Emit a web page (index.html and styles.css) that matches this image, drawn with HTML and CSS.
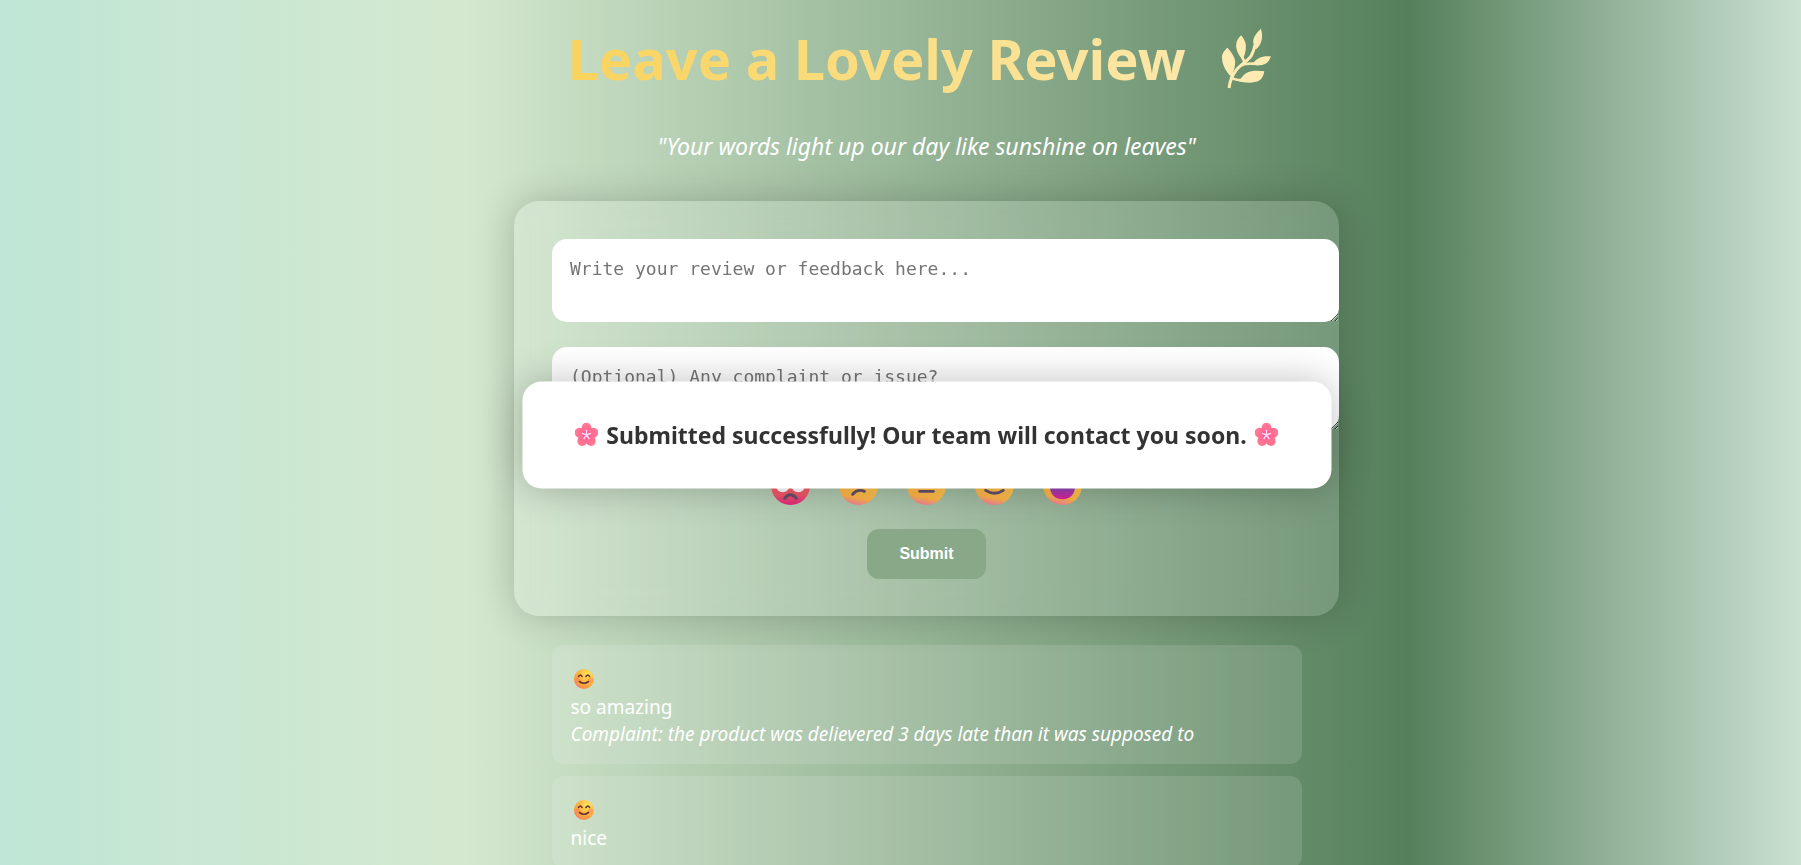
FILE: index.html
```html
<!DOCTYPE html>
<html lang="en">
<head>
<meta charset="utf-8">
<title>Leave a Lovely Review</title>
<link rel="stylesheet" href="styles.css">
</head>
<body>
<svg class="defs" aria-hidden="true">
  <defs>
    <radialGradient id="yellow" cx="0.68" cy="0.25" r="0.85">
      <stop offset="0" stop-color="#ffe65c"/><stop offset="0.55" stop-color="#ffb23c"/><stop offset="0.85" stop-color="#f99347"/><stop offset="1" stop-color="#ef5f91"/>
    </radialGradient>
    <linearGradient id="face" x1="0.6" y1="0" x2="0.4" y2="1">
      <stop offset="0" stop-color="#ffe05c"/><stop offset="0.8" stop-color="#ffb648"/><stop offset="1" stop-color="#f0809a"/>
    </linearGradient>
    <linearGradient id="red" x1="0.5" y1="0" x2="0.5" y2="1">
      <stop offset="0" stop-color="#ff7a55"/><stop offset="0.75" stop-color="#f2566b"/><stop offset="1" stop-color="#e0247e"/>
    </linearGradient>
    <linearGradient id="mouth" x1="0" y1="0" x2="0" y2="1">
      <stop offset="0" stop-color="#7a4fc0"/><stop offset="1" stop-color="#e0209a"/>
    </linearGradient>
    <linearGradient id="petal" x1="0" y1="0" x2="0" y2="1">
      <stop offset="0" stop-color="#ff8095"/><stop offset="0.6" stop-color="#ff6a90"/><stop offset="1" stop-color="#ff6fc4"/>
    </linearGradient>
    <symbol id="smile" viewBox="0 0 40 40">
      <circle cx="20" cy="20" r="20" fill="url(#yellow)"/>
      <circle cx="7" cy="22" r="5" fill="#ff7d5e" opacity="0.5"/><circle cx="33" cy="22" r="5" fill="#ff7d5e" opacity="0.5"/>
      <g fill="none" stroke="#5b3440" stroke-width="3.2" stroke-linecap="round"><path d="M9 15q4-6 7 0M24 15q4-6 7 0M11 25q9 7 18 0"/></g>
    </symbol>
    <symbol id="flower" viewBox="0 0 48 48">
      <g fill="url(#petal)">
        <ellipse cx="24" cy="12" rx="10" ry="12"/>
        <ellipse cx="24" cy="12" rx="10" ry="12" transform="rotate(72 24 25)"/>
        <ellipse cx="24" cy="12" rx="10" ry="12" transform="rotate(144 24 25)"/>
        <ellipse cx="24" cy="12" rx="10" ry="12" transform="rotate(216 24 25)"/>
        <ellipse cx="24" cy="12" rx="10" ry="12" transform="rotate(288 24 25)"/>
      </g>
      <circle cx="24" cy="25" r="8" fill="#f2487c" opacity="0.6"/>
      <path d="M24 25V16M24 25l8-3M24 25l5 7M24 25l-5 7M24 25l-8-3" stroke="#ffd6f2" stroke-width="3" stroke-linecap="round"/>
      <circle cx="24" cy="25" r="3" fill="#ffd6f2"/>
    </symbol>
  </defs>
</svg>

<main class="page">
  <h1 class="title">
    <span class="title-text">Leave a Lovely Review</span>
    <svg class="leaf" viewBox="60 25 152 182" aria-hidden="true">
      <path d="M84 204C86 184 93 167 105 151C119 133 142 122 151 106C157 96 159 88 161 76" fill="none" stroke="#fdebb3" stroke-width="9"/>
      <path d="M88 170Q98 181 124 181M121 137Q131 130 160 131M131 128L119 104" fill="none" stroke="#fdebb3" stroke-width="8"/>
      <g fill="#fdebb3">
        <path d="M79 84C70 92 62 102 63 116C64 138 78 160 91 170C95 160 103 142 102 124C100 108 88 94 79 84Z"/>
        <path d="M120 47C111 55 105 65 105 77C105 93 115 110 125 118C130 108 135 92 134 77C133 66 127 55 120 47Z"/>
        <path d="M179 27C167 38 156 52 156 66C157 76 160 84 164 89C174 80 181 68 182 56C183 46 182 36 179 27Z"/>
        <path d="M209 110C192 108 170 111 158 128L148 134C162 138 184 138 194 131C203 125 205 117 209 110Z"/>
        <path d="M189 154C164 150 134 152 124 170L112 183C130 190 161 190 174 182C184 175 188 164 189 154Z"/>
      </g>
    </svg>
  </h1>
  <p class="tagline">"Your words light up our day like sunshine on leaves"</p>

  <form class="card">
    <textarea class="field" aria-label="Review" placeholder="Write your review or feedback here..."></textarea>
    <textarea class="field" aria-label="Complaint" placeholder="(Optional) Any complaint or issue?"></textarea>
    <div class="ratings">
      <button type="button" class="rating" aria-label="Angry"><svg viewBox="0 0 40 40"><circle cx="20" cy="20" r="20" fill="url(#red)"/><circle cx="12" cy="20" r="7" fill="#fff"/><circle cx="28" cy="20" r="7" fill="#fff"/><path d="M14 33q6-7 12 0" fill="none" stroke="#64506c" stroke-width="3" stroke-linecap="round"/></svg></button>
      <button type="button" class="rating" aria-label="Unhappy"><svg viewBox="0 0 40 40"><circle cx="20" cy="20" r="20" fill="url(#face)"/><circle cx="13" cy="16" r="2.5" fill="#64506c"/><circle cx="27" cy="16" r="2.5" fill="#64506c"/><path d="M14 29q5-6 12-3" fill="none" stroke="#64506c" stroke-width="3" stroke-linecap="round"/></svg></button>
      <button type="button" class="rating" aria-label="Neutral"><svg viewBox="0 0 40 40"><circle cx="20" cy="20" r="20" fill="url(#face)"/><circle cx="13" cy="16" r="2.5" fill="#64506c"/><circle cx="27" cy="16" r="2.5" fill="#64506c"/><path d="M13 26h14" stroke="#64506c" stroke-width="3" stroke-linecap="round"/></svg></button>
      <button type="button" class="rating" aria-label="Happy"><svg viewBox="0 0 40 40"><circle cx="20" cy="20" r="20" fill="url(#face)"/><path d="M9 17q4-6 7 0M24 17q4-6 7 0M11 25q9 6 18 0" fill="none" stroke="#64506c" stroke-width="3" stroke-linecap="round"/></svg></button>
      <button type="button" class="rating" aria-label="Delighted"><svg viewBox="0 0 40 40"><circle cx="20" cy="20" r="20" fill="url(#face)"/><path d="M7 20h26c0 9-5 14-13 14S7 29 7 20Z" fill="url(#mouth)"/></svg></button>
    </div>
    <button type="submit" class="submit">Submit</button>
  </form>

  <section class="reviews" aria-label="Reviews">
    <article class="review">
      <div class="mood"><svg class="mood-icon" aria-hidden="true"><use href="#smile"/></svg></div>
      <div>so amazing</div>
      <em class="complaint">Complaint: the product was delievered 3 days late than it was supposed to</em>
    </article>
    <article class="review">
      <div class="mood"><svg class="mood-icon" aria-hidden="true"><use href="#smile"/></svg></div>
      <div>nice</div>
    </article>
  </section>
</main>

<div class="popup" role="status">
  <svg class="flower" aria-hidden="true"><use href="#flower"/></svg>
  <span>Submitted successfully! Our team will contact you soon.</span>
  <svg class="flower" aria-hidden="true"><use href="#flower"/></svg>
</div>
</body>
</html>
```
FILE: styles.css
```css
* { box-sizing: border-box; }

:root { --shift: 52px; }

html { height: 100%; }

body {
  margin: 0;
  height: 100vh;
  overflow: hidden;
  padding-left: var(--shift);
  color: #fff;
  font-family: "Segoe UI", "Noto Sans", sans-serif;
  background: linear-gradient(90deg, #bfe6d6 0%, #d4e8cf 25%, #557f5b 76%, #daeee2 100%) no-repeat;
  background-size: calc(100% + var(--shift)) 100%;
}

.defs { position: absolute; width: 0; height: 0; }

.page {
  display: flex;
  flex-direction: column;
  align-items: center;
  padding: 18px 0;
}

.title {
  display: flex;
  align-items: center;
  gap: 35px;
  margin: 0 14px 0 0;
  font-size: 56px;
  line-height: 80px;
}

.title-text {
  color: transparent;
  background: linear-gradient(90deg, #f9d35c, #fbe7a8);
  background-clip: text;
  -webkit-background-clip: text;
}

.leaf { width: 51px; height: 61px; }

.tagline {
  margin: 32px 0 38px;
  font-size: 23px;
  line-height: 33px;
  font-style: italic;
}

.card {
  display: flex;
  flex-direction: column;
  align-items: center;
  width: 100%;
  max-width: 825px;
  padding: 38px 0 37px 38px;
  border-radius: 25px;
  background: rgba(255, 255, 255, 0.15);
  box-shadow: 0 0 38px rgba(0, 0, 0, 0.2);
  backdrop-filter: blur(12px);
}

.field {
  display: block;
  width: 100%;
  height: 83px;
  margin: 0 0 25px;
  padding: 18px;
  border: 0;
  border-radius: 15px;
  background: #fff;
  font-family: Consolas, "DejaVu Sans Mono", monospace;
  font-size: 18px;
  line-height: 23px;
}

.field::placeholder { color: #757575; }

.ratings {
  display: flex;
  gap: 29px;
  margin: 11px 38px 24px 0;
}

.rating {
  width: 39px;
  height: 39px;
  padding: 0;
  border: 0;
  background: none;
}

.rating svg { display: block; width: 100%; height: 100%; }

.submit {
  width: 119px;
  height: 50px;
  margin-right: 38px;
  border: 0;
  border-radius: 12px;
  background: #88a888;
  color: #fff;
  font: bold 16px Arial, "Liberation Sans", sans-serif;
}

.reviews {
  display: grid;
  gap: 12px;
  width: 100%;
  max-width: 750px;
  margin-top: 29px;
}

.review {
  padding: 19px 19px 16px;
  border-radius: 12px;
  background: rgba(255, 255, 255, 0.12);
  font-size: 19px;
  line-height: 27px;
}

.mood { display: flex; align-items: center; height: 30px; padding-left: 3px; }

.mood-icon { width: 20px; height: 20px; }

.popup {
  position: fixed;
  top: calc(50% + 2px);
  left: calc(50% + var(--shift) / 2);
  transform: translate(-50%, -50%);
  display: flex;
  align-items: center;
  justify-content: center;
  gap: 8px;
  width: 809px;
  padding: 36px 0;
  border-radius: 19px;
  background: #fff;
  color: #333;
  box-shadow: 0 0 38px rgba(0, 0, 0, 0.25);
  font-size: 23px;
  font-weight: bold;
  line-height: 35px;
  white-space: nowrap;
}

.flower { width: 24px; height: 24px; }
```
